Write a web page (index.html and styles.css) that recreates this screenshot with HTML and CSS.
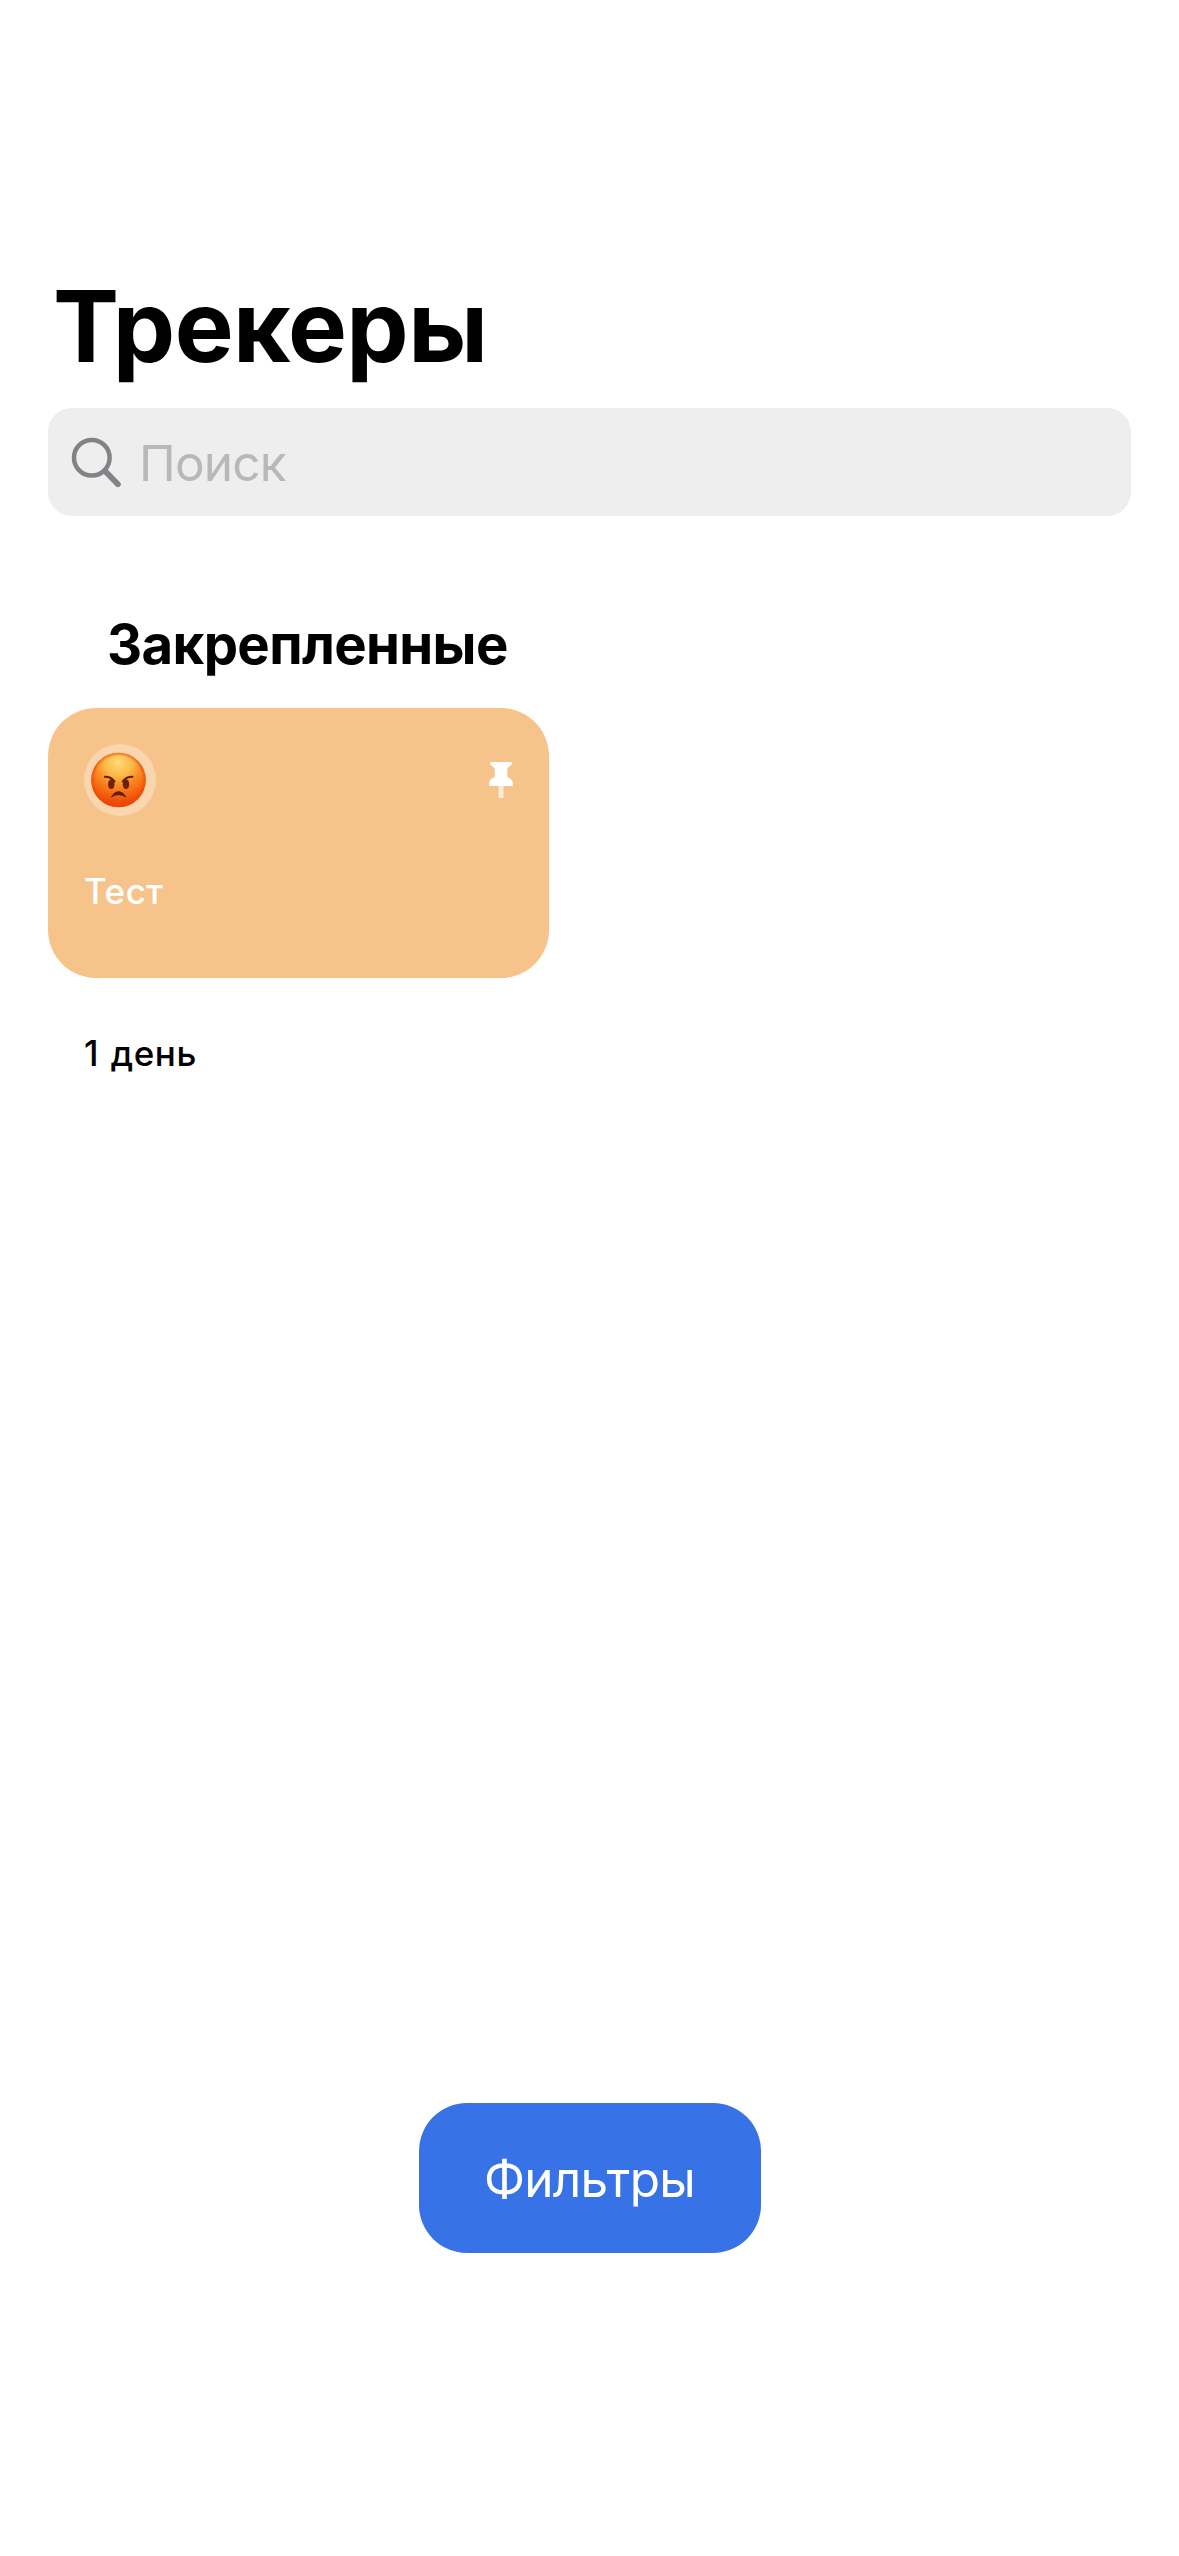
FILE: index.html
```html
<!DOCTYPE html>
<html lang="ru">
<head>
<meta charset="utf-8">
<title>Трекеры</title>
<link rel="stylesheet" href="styles.css">
</head>
<body>
<main class="screen">
  <h1 class="title">Трекеры</h1>
  <div class="search">
    <svg class="search-icon" width="52" height="52" viewBox="0 0 52 52" fill="none" stroke="#838387" stroke-linecap="round">
      <circle cx="21.8" cy="21.8" r="17.8" stroke-width="4.5"/>
      <path d="M35.3 35.3 47.9 48.2" stroke-width="5.8"/>
    </svg>
    <span class="placeholder">Поиск</span>
  </div>
  <section class="category">
    <h2 class="category-title">Закрепленные</h2>
    <article class="tracker">
      <div class="card">
        <div class="card-top">
          <span class="emoji">
            <svg width="72" height="72" viewBox="0 0 72 72">
              <defs>
                <radialGradient id="face" gradientUnits="userSpaceOnUse" cx="34.5" cy="18" r="46">
                  <stop offset="0" stop-color="#fedb76"/>
                  <stop offset=".3" stop-color="#fdba4a"/>
                  <stop offset=".5" stop-color="#fa8c25"/>
                  <stop offset=".75" stop-color="#f4600f"/>
                  <stop offset="1" stop-color="#e63a04"/>
                </radialGradient>
                <radialGradient id="rim">
                  <stop offset=".86" stop-color="#ee4a08" stop-opacity="0"/>
                  <stop offset="1" stop-color="#ee4a08" stop-opacity=".75"/>
                </radialGradient>
              </defs>
              <circle cx="34.5" cy="36" r="27.3" fill="url(#face)"/>
              <circle cx="34.5" cy="36" r="27.3" fill="url(#rim)"/>
              <g fill="#702006">
                <ellipse cx="27.3" cy="40.2" rx="3.2" ry="4.7"/>
                <ellipse cx="42" cy="40.2" rx="3.2" ry="4.7"/>
              </g>
              <g fill="none" stroke="#602006" stroke-width="1.9" stroke-linecap="round">
                <path d="M20.8 32.7q6.8.1 9.8 4.8"/>
                <path d="M48.5 32.7q-6.8.1-9.8 4.8"/>
              </g>
              <path d="M27.4 53q3-5.4 7.2-5.4t7.2 5.4q-3.4-2.3-7.2-2.3t-7.2 2.3z" fill="#602006" stroke="#602006" stroke-width=".8" stroke-linejoin="round"/>
            </svg>
          </span>
          <svg class="pin" width="24" height="36" viewBox="0 0 24 36" fill="#fff">
            <path d="M1.2 0h21.6v2.6l-4.6 3.6.3 8.7q4.5 2 5.3 5.2V24H.2v-3.9q.8-3.2 5.3-5.2l.3-8.7L1.2 2.6z"/>
            <path d="M9.5 24h5v12h-5z" opacity=".65"/>
          </svg>
        </div>
        <p class="name">Тест</p>
      </div>
      <p class="days">1 день</p>
    </article>
  </section>
  <button class="filters" type="button">Фильтры</button>
</main>
</body>
</html>
```

FILE: styles.css
```css
* {
  box-sizing: border-box;
  margin: 0;
}

body {
  background: #fff;
  color: #000;
  font-family: Inter, "Liberation Sans", sans-serif;
}

.screen {
  display: flex;
  flex-direction: column;
  height: 2556px;
  padding: 266px 48px 303px;
}

.title {
  padding-left: 5px;
  font-size: 99px;
  font-weight: 700;
  line-height: 120px;
  letter-spacing: -0.6px;
}

.search {
  display: flex;
  align-items: center;
  gap: 17px;
  height: 108px;
  margin-top: 22px;
  padding-left: 22px;
  border-radius: 24px;
  background: #eeeeee;
}

.placeholder {
  padding-top: 2px;
  color: #b8b8b9;
  font-size: 49.5px;
  line-height: 60px;
  letter-spacing: -0.8px;
}

.category {
  margin-top: 94px;
}

.category-title {
  padding-left: 59px;
  font-size: 54.5px;
  font-weight: 700;
  line-height: 68px;
  letter-spacing: -0.65px;
}

.tracker {
  width: 501px;
  margin-top: 30px;
}

.card {
  height: 270px;
  padding: 36px;
  border-radius: 48px;
  background: #f6c48b;
  color: #fff;
}

.card-top {
  display: flex;
  align-items: center;
  justify-content: space-between;
}

.emoji {
  width: 72px;
  height: 72px;
  border-radius: 50%;
  background: rgba(255, 255, 255, 0.3);
}

.emoji svg {
  display: block;
}

.name,
.days {
  font-size: 35px;
  font-weight: 500;
  line-height: 54px;
  letter-spacing: 0.5px;
}

.name {
  margin-top: 48px;
}

.days {
  margin-top: 48px;
  padding-left: 36px;
  word-spacing: 2px;
}

.filters {
  align-self: center;
  width: 342px;
  height: 150px;
  margin-top: auto;
  padding: 2px 0 0;
  border: 0;
  border-radius: 48px;
  background: #3772e7;
  color: #fff;
  font: 400 49.5px/60px Inter, "Liberation Sans", sans-serif;
  letter-spacing: -0.7px;
}
```
